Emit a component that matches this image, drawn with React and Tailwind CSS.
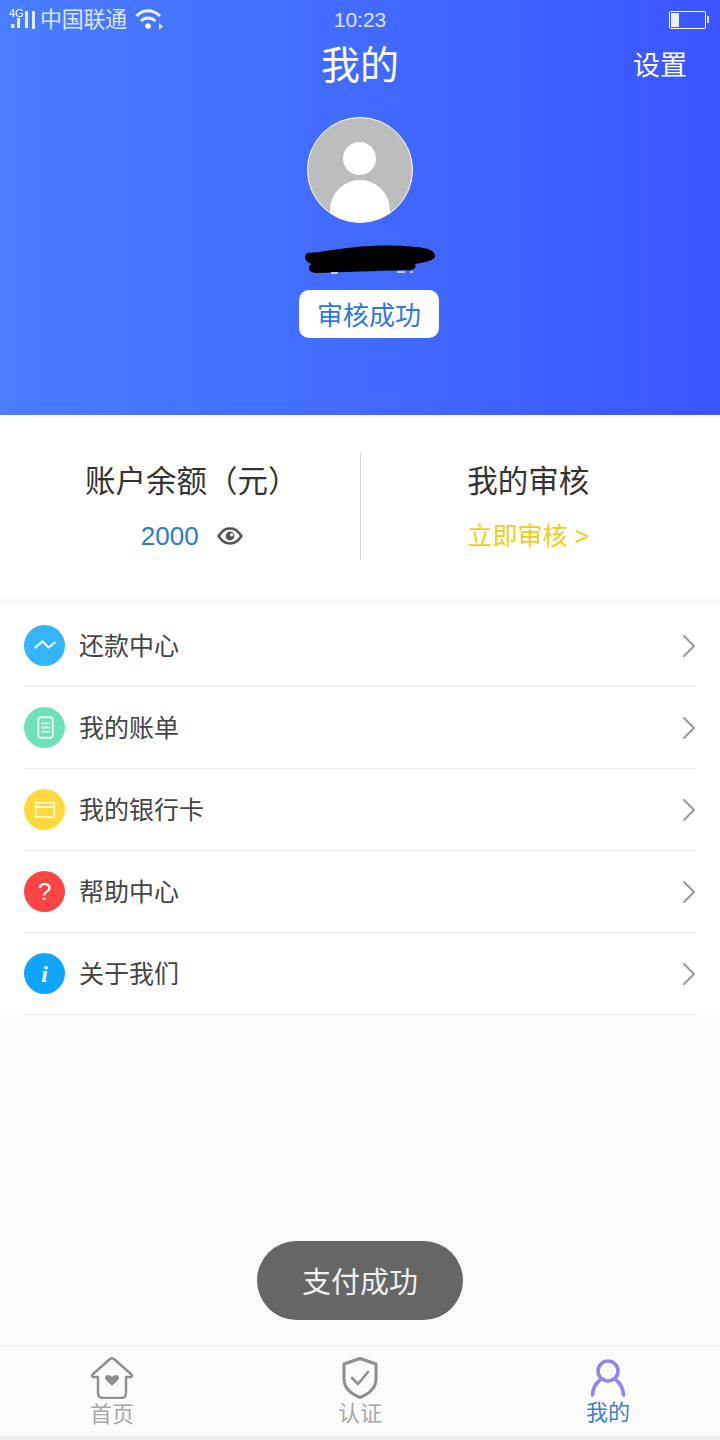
import { ChevronRight } from "lucide-react";

const FONT = "font-['Liberation_Sans','Noto_Sans_CJK_SC',sans-serif]";

const MENU = [
  {
    name: "还款中心",
    color: "bg-[#35b4fb]",
    icon: <path d="M11 22 L18 16 L24 22 L30 17" fill="none" stroke="#fff" strokeWidth="2" strokeLinecap="round" strokeLinejoin="round" />,
  },
  {
    name: "我的账单",
    color: "bg-[#6fe0b8]",
    icon: (
      <g fill="none" stroke="#fff" strokeWidth="1.8" opacity="0.85">
        <rect x="14" y="10" width="14" height="20" rx="2.5" />
        <path d="M17 16h8M17 20h8M17 24h8" />
      </g>
    ),
  },
  {
    name: "我的银行卡",
    color: "bg-[#fdd93f]",
    icon: (
      <g fill="none" stroke="#fff" strokeWidth="1.8" opacity="0.8">
        <rect x="11.5" y="13.5" width="18" height="14" />
        <path d="M11.5 17.5h18" />
      </g>
    ),
  },
  {
    name: "帮助中心",
    color: "bg-[#fb4444]",
    icon: (
      <text x="20" y="28" textAnchor="middle" fontSize="24" fill="#fff" fontFamily="Liberation Sans, sans-serif">
        ?
      </text>
    ),
  },
  {
    name: "关于我们",
    color: "bg-[#0ea5fb]",
    icon: (
      <text x="20" y="28" textAnchor="middle" fontSize="23" fontWeight="700" fontStyle="italic" fill="#fff" fontFamily="Liberation Serif, serif">
        i
      </text>
    ),
  },
];

const StatusBar = () => (
  <div className="relative flex h-[38px] items-center px-[10px] pt-[1px] text-[22px] leading-none text-white/80">
    {/* Signal */}
    <svg width="30" height="28" viewBox="0 0 30 28" className="shrink-0 overflow-visible">
      <text x="-1" y="11" fontSize="11" fill="#fff" fontFamily="Liberation Sans, sans-serif">4G</text>
      <g fill="#fff" opacity="0.85">
        <rect x="1" y="18" width="3.5" height="4" />
        <rect x="7" y="12" width="3" height="10" />
        <rect x="15" y="5" width="3" height="17" />
        <rect x="22" y="5" width="3" height="18" />
      </g>
    </svg>
    <span className="tracking-[-0.3px]">中国联通</span>
    {/* Wifi */}
    <svg width="30" height="24" viewBox="0 0 30 24" className="ml-[8px] shrink-0">
      <g fill="none" stroke="#fff" strokeWidth="3" opacity="0.9">
        <path d="M1.5 8 C8 1 18 1 25 8" />
        <path d="M6 13 C10 9 16 9 20.5 13" />
      </g>
      <circle cx="13" cy="18" r="2.8" fill="#fff" />
      <path d="M24 15 l4 3.5 l-4 3.5z" fill="#fff" opacity="0.8" />
    </svg>
    <span className="absolute left-0 right-0 text-center text-[21px]">10:23</span>
    {/* Battery */}
    <div className="ml-auto mr-[1px] flex items-center">
      <div className="h-[18px] w-[37px] rounded-[2px] border border-white p-[1px]">
        <div className="h-full w-[8px] bg-white/90" />
      </div>
      <div className="ml-[1px] h-[7px] w-[2px] bg-white/80" />
    </div>
  </div>
);

const Header = () => (
  <div className="flex h-[415px] flex-col bg-gradient-to-r from-[#4a7dff] to-[#3b55ff]">
    <StatusBar />
    <div className="relative h-[54px] pt-[1px] text-center text-[39px] leading-[54px] text-white">
      我的
      <span className="absolute right-[33px] top-[1px] text-[27px] leading-[54px]">设置</span>
    </div>
    <div className="mt-[25px] flex flex-col items-center">
      {/* Avatar */}
      <div className="relative ml-[-1px] h-[106px] w-[106px] overflow-hidden rounded-full border border-white bg-[#bdbdbd]">
        <div className="absolute left-[35px] top-[24px] h-[33px] w-[33px] rounded-full bg-white" />
        <div className="absolute left-[22px] top-[62px] h-[60px] w-[60px] rounded-full bg-white" />
      </div>
      {/* Scribbled out name */}
      <svg width="130" height="30" viewBox="0 0 130 30" className="ml-[20px] mt-[22px]">
        <path d="M2 8 C20 7 40 2 65 1 C85 0 105 1 118 3 C126 4 130 7 130 11 C130 15 122 17 110 19 C112 23 108 26 100 25 C70 26 35 27 10 28 C3 27 2 21 7 19 C-1 17 -1 11 2 8z" fill="#000" />
        <path d="M26 28h7M92 27h8M105 27h3" stroke="#e8ecff" strokeWidth="1.5" />
      </svg>
      <div className="ml-[18px] mt-[15px] flex h-[48px] w-[140px] items-center justify-center rounded-[10px] bg-white pt-[4px] text-[26px] leading-none text-[#2d78d8]">
        审核成功
      </div>
    </div>
  </div>
);

const Stats = () => (
  <div className="flex h-[182px] items-center bg-white">
    <div className="flex flex-1 flex-col items-center pl-[24px]">
      <div className="pt-[1px] text-[30.5px] leading-[40px] text-[#333]">账户余额（元）</div>
      <div className="mt-[19px] flex h-[32px] items-center text-[26px] text-[#2d78d0]">
        2000
        <svg width="26" height="18" viewBox="0 0 26 18" className="ml-[18px]">
          <path d="M1.5 9 C6 2.5 9 1.5 13 1.5 C17 1.5 20 2.5 24.5 9 C20 15.5 17 16.5 13 16.5 C9 16.5 6 15.5 1.5 9z" fill="none" stroke="#555" strokeWidth="2.6" />
          <circle cx="13" cy="9" r="4.4" fill="#555" />
          <circle cx="14.5" cy="7.8" r="1.6" fill="#fff" />
        </svg>
      </div>
    </div>
    <div className="h-[108px] w-px bg-[#d8d8d8]" />
    <div className="flex flex-1 flex-col items-center pr-[24px]">
      <div className="pt-[1px] text-[30.5px] leading-[40px] text-[#333]">我的审核</div>
      <div className="mt-[19px] h-[32px] text-[25px] leading-[32px] text-[#f3cd17]">立即审核 &gt;</div>
    </div>
  </div>
);

const Menu = () => (
  <div className="mt-[8px] bg-white">
    {MENU.map((item) => (
      <div key={item.name} className="mx-[24px] flex h-[82px] items-center border-b border-[#e9e9e9]">
        <svg width="41" height="41" viewBox="0 0 40 40" className={`shrink-0 rounded-full ${item.color}`}>
          {item.icon}
        </svg>
        <span className="ml-[14px] pt-[2px] text-[25px] leading-none text-[#444]">{item.name}</span>
        <ChevronRight size={40} strokeWidth={1.2} className="ml-auto mr-[-13px] text-[#999]" />
      </div>
    ))}
  </div>
);

const TabBar = () => (
  <div className="mt-auto border-t border-[#f4f4f4] bg-[#fbfbfb]">
    <div className="flex h-[90px] justify-between px-[90px] text-center text-[22px] leading-[26px]">
      <div className="flex w-[44px] flex-col items-center pt-[11px] text-[#a8a8a8]">
        <svg width="44" height="42" viewBox="0 0 44 42" className="shrink-0">
          <path d="M8 20 L3 20 Q1 19 3 17 L20 2 Q22 0.5 24 2 L41 17 Q43 19 41 20 L36 20 L36 36 Q36 41 31 41 L13 41 Q8 41 8 36z" fill="none" stroke="#8f8f8f" strokeWidth="2.4" strokeLinejoin="round" />
          <path d="M22 29 L15.5 22.5 Q14 19 17.5 18 Q20.5 17.5 22 20 Q23.5 17.5 26.5 18 Q30 19 28.5 22.5z" fill="#8f8f8f" />
        </svg>
        <span className="mt-[3px] whitespace-nowrap">首页</span>
      </div>
      <div className="flex w-[44px] flex-col items-center pt-[11px] text-[#a8a8a8]">
        <svg width="36" height="42" viewBox="0 0 36 42" className="shrink-0">
          <path d="M18 1.5 L34 7 L34 22 Q34 34 18 40.5 Q2 34 2 22 L2 7z" fill="none" stroke="#8f8f8f" strokeWidth="3" strokeLinejoin="round" />
          <path d="M10 21 L16 27 L26 15" fill="none" stroke="#8f8f8f" strokeWidth="2.6" strokeLinecap="round" strokeLinejoin="round" />
        </svg>
        <span className="mt-[2px] whitespace-nowrap">认证</span>
      </div>
      <div className="flex w-[44px] flex-col items-center pt-[13px] text-[#3d7fd0]">
        <svg width="36" height="38" viewBox="0 0 36 38" className="shrink-0">
          <circle cx="18" cy="12" r="10" fill="none" stroke="#8f87ea" strokeWidth="3.6" />
          <path d="M2.5 36 C3 28 6 24 10 21 M33.5 36 C33 28 30 24 26 21" fill="none" stroke="#8f87ea" strokeWidth="3.6" strokeLinecap="round" />
        </svg>
        <span className="mt-[3px] whitespace-nowrap">我的</span>
      </div>
    </div>
    <div className="h-[4px] bg-[#efefef]" />
  </div>
);

export default function App() {
  return (
    <div className={`relative flex h-[1440px] w-[720px] flex-col overflow-hidden bg-[#f9f9f9] ${FONT}`}>
      <Header />
      <Stats />
      <Menu />
      <TabBar />

      {/* Toast */}
      <div className="absolute left-[257px] top-[1241px] flex h-[79px] w-[206px] items-center justify-center rounded-[40px] bg-[#666] pt-[7px] text-[29px] text-white/90">
        支付成功
      </div>
    </div>
  );
}
